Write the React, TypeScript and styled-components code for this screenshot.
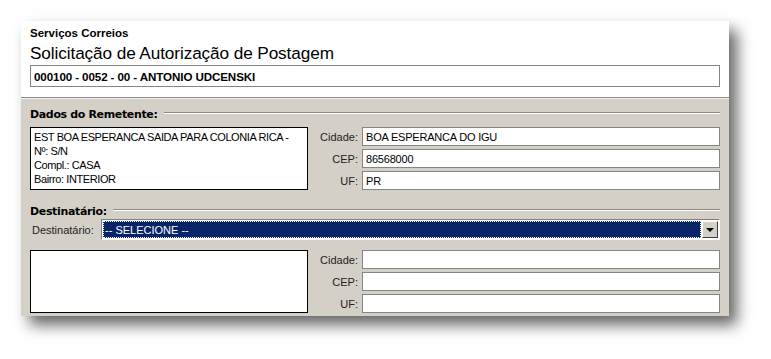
import React from 'react';
import styled, {createGlobalStyle} from 'styled-components';

const GlobalStyle = createGlobalStyle`
	html, body {
		margin: 0;
		padding: 0;
		background: #ffffff;
	}
	body {
		font-family: "Liberation Sans", Arial, sans-serif;
		font-size: 11px;
		color: #000;
	}
`;

const Page = styled.div`
	width: 771px;
	height: 359px;
	padding: 21px 0 0 21px;
	box-sizing: border-box;
`;

const Window = styled.div`
	width: 708px;
	box-shadow: 8px 9px 14px rgba(0, 0, 0, 0.6);
`;

const Header = styled.header`
	background: #ffffff;
	padding: 6px 9px 10px 9px;
	border-bottom: 1px solid #8c8c8c;
	box-shadow: 0 1px 0 #f4f3ef;
	display: flex;
	flex-direction: column;
`;

const Overline = styled.div`
	font-weight: bold;
	font-size: 11.5px;
	line-height: 13px;
`;

const Title = styled.h1`
	font-weight: normal;
	font-size: 17.2px;
	line-height: 20px;
	margin: 3px 0 2px 0;
	letter-spacing: -0.1px;
`;

const Field = styled.div<{$bold?: boolean; $height?: number}>`
	background: #ffffff;
	border: 1px solid #858585;
	height: ${p => p.$height ?? 19}px;
	box-sizing: border-box;
	padding: 0 3px;
	display: flex;
	align-items: center;
	font-size: ${p => (p.$bold ? 11.6 : 11)}px;
	letter-spacing: ${p => (p.$bold ? '-0.1px' : '-0.2px')};
	font-weight: ${p => (p.$bold ? 'bold' : 'normal')};
	white-space: nowrap;
	overflow: hidden;
`;

const Body = styled.main`
	background: #d4d0c8;
	margin-top: 1px;
	padding: 7px 9px 3px 9px;
	display: flex;
	flex-direction: column;
`;

const SectionHead = styled.div<{$gap: number}>`
	display: flex;
	align-items: center;
	height: 16px;
	margin-bottom: ${p => p.$gap}px;
	gap: 6px;
	font-weight: bold;
	font-size: 11px;
	font-family: "DejaVu Sans", Verdana, sans-serif;
	letter-spacing: -0.35px;
	white-space: nowrap;
`;

const Rule = styled.div`
	flex: 1;
	height: 1px;
	background: #8d8a84;
	border-bottom: 1px solid #ffffff;
	margin-top: -2px;
`;

const Row = styled.div<{$gap?: number}>`
	display: flex;
	margin-bottom: ${p => p.$gap ?? 0}px;
`;

const AddressBox = styled.div`
	width: 278px;
	height: 63px;
	box-sizing: border-box;
	background: #ffffff;
	border: 1px solid #000000;
	padding: 2px 3px;
	font-size: 11px;
	line-height: 14px;
	letter-spacing: -0.4px;
	white-space: nowrap;
	overflow: hidden;
`;

const Fields = styled.div`
	flex: 1;
	display: grid;
	grid-template-columns: 50px 1fr;
	column-gap: 4px;
	row-gap: 3px;
	align-items: center;
`;

const Label = styled.label`
	text-align: right;
	font-size: 11px;
	color: #222;
`;

const SelectRow = styled.div`
	display: flex;
	align-items: center;
	height: 21px;
	margin-bottom: 10px;
	padding-left: 2px;
`;

const SelectLabel = styled.label`
	width: 69px;
	font-size: 11px;
	color: #222;
`;

const Select = styled.div`
	flex: 1;
	height: 21px;
	box-sizing: border-box;
	display: flex;
	align-items: stretch;
	background: #ffffff;
	border-top: 1px solid #808080;
	border-left: 1px solid #808080;
	border-bottom: 1px solid #ffffff;
	border-right: 1px solid #ffffff;
	padding: 1px;
	gap: 1px;
`;

const Chosen = styled.div`
	flex: 1;
	background: #0a246a;
	color: #ffffff;
	outline: 1px dotted #ffffff;
	outline-offset: -1px;
	border: 1px dotted #000;
	display: flex;
	align-items: center;
	padding-left: 1px;
	font-size: 11px;
`;

const DropButton = styled.div`
	width: 16px;
	background: #d4d0c8;
	border-top: 1px solid #ffffff;
	border-left: 1px solid #ffffff;
	border-right: 1px solid #404040;
	border-bottom: 1px solid #404040;
	box-sizing: border-box;
	display: flex;
	align-items: center;
	justify-content: center;
`;

const Arrow = styled.div`
	width: 0;
	height: 0;
	border-left: 4px solid transparent;
	border-right: 4px solid transparent;
	border-top: 4px solid #000;
	margin-top: 1px;
`;

const sender = [
	'EST BOA ESPERANCA SAIDA PARA COLONIA RICA -',
	'Nº: S/N',
	'Compl.: CASA',
	'Bairro: INTERIOR',
];

const CityFields = ({cidade, cep, uf}: {cidade: string; cep: string; uf: string}) => (
	<Fields>
		<Label>Cidade:</Label>
		<Field>{cidade}</Field>
		<Label>CEP:</Label>
		<Field>{cep}</Field>
		<Label>UF:</Label>
		<Field>{uf}</Field>
	</Fields>
);

export default function App() {
	return (
		<>
			<GlobalStyle />
			<Page>
				<Window>
					<Header>
						<Overline>Serviços Correios</Overline>
						<Title>Solicitação de Autorização de Postagem</Title>
						<Field $bold $height={22}>000100 - 0052 - 00 - ANTONIO UDCENSKI</Field>
					</Header>
					<Body>
						<SectionHead $gap={5}>
							Dados do Remetente:
							<Rule />
						</SectionHead>
						<Row $gap={13}>
							<AddressBox>
								{sender.map(line => (
									<div key={line}>{line}</div>
								))}
							</AddressBox>
							<CityFields cidade="BOA ESPERANCA DO IGU" cep="86568000" uf="PR" />
						</Row>
						<SectionHead $gap={0}>
							Destinatário:
							<Rule />
						</SectionHead>
						<SelectRow>
							<SelectLabel>Destinatário:</SelectLabel>
							<Select>
								<Chosen>-- SELECIONE --</Chosen>
								<DropButton>
									<Arrow />
								</DropButton>
							</Select>
						</SelectRow>
						<Row>
							<AddressBox />
							<CityFields cidade="" cep="" uf="" />
						</Row>
					</Body>
				</Window>
			</Page>
		</>
	);
}
